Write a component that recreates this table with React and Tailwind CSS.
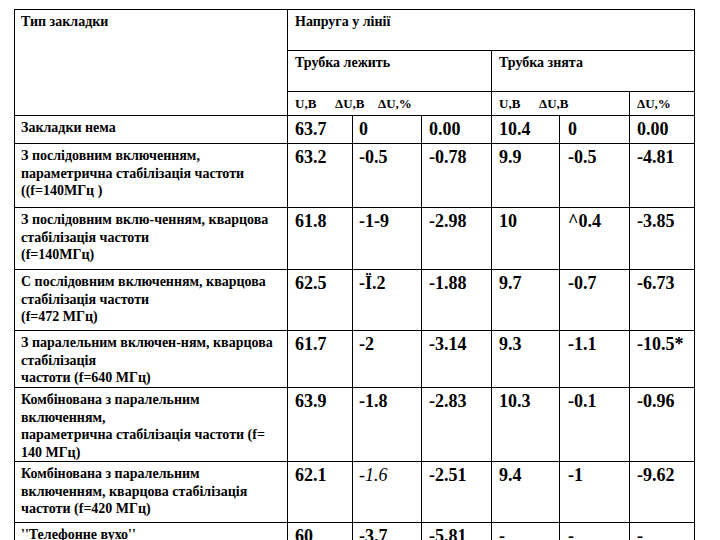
import React from "react";

const rows = [
  {
    h: "h-[28px]",
    label: ["Закладки нема"],
    vals: ["63.7", "0", "0.00", "10.4", "0", "0.00"],
  },
  {
    h: "h-[64px]",
    label: ["З послідовним включенням,", "параметрична стабілізація частоти", "((f=140МГц )"],
    vals: ["63.2", "-0.5", "-0.78", "9.9", "-0.5", "-4.81"],
  },
  {
    h: "h-[62px]",
    label: ["З послідовним вклю-ченням, кварцова", "стабілізація частоти", "(f=140МГц)"],
    vals: ["61.8", "-1-9", "-2.98", "10", "^0.4", "-3.85"],
  },
  {
    h: "h-[61px]",
    label: ["С послідовним включенням, кварцова", "стабілізація частоти", "(f=472 МГц)"],
    vals: ["62.5", "-Ï.2", "-1.88", "9.7", "-0.7", "-6.73"],
  },
  {
    h: "h-[57px]",
    label: ["З паралельним включен-ням, кварцова", "стабілізація", "частоти (f=640 МГц)"],
    vals: ["61.7", "-2", "-3.14", "9.3", "-1.1", "-10.5*"],
  },
  {
    h: "h-[74px]",
    label: ["Комбінована з паралельним", "включенням,", "параметрична стабілізація частоти (f=", "140 МГц)"],
    vals: ["63.9", "-1.8", "-2.83", "10.3", "-0.1", "-0.96"],
  },
  {
    h: "h-[61px]",
    label: ["Комбінована з паралельним", "включенням, кварцова стабілізація", "частоти (f=420 МГц)"],
    vals: ["62.1", "-1.6", "-2.51", "9.4", "-1", "-9.62"],
    italic: 1,
  },
  {
    h: "h-[61px]",
    label: ["''Телефонне вухо''"],
    vals: ["60", "-3.7", "-5.81", "-", "-", "-"],
  },
];

const pads = ["pl-[7px]", "pl-[6px]", "pl-[7px]", "pl-[7px]", "pl-[8px]", "pl-[7px]"];

export default function App() {
  return (
    <div className="bg-white min-h-[540px] w-[720px] pt-[9px] pl-[14px] font-['Liberation_Serif',serif] text-black">
      <table className="table-fixed border-collapse w-[681px] font-bold">
        <colgroup>
          <col className="w-[273px]" />
          <col className="w-[65px]" />
          <col className="w-[69px]" />
          <col className="w-[70px]" />
          <col className="w-[68px]" />
          <col className="w-[70px]" />
          <col className="w-[65px]" />
        </colgroup>
        <tbody>
          <tr className="h-[41px]">
            <td rowSpan={3} className="border border-black align-top pl-[6px] pt-[3px] text-[14px] leading-[18px]">
              Тип закладки
            </td>
            <td colSpan={6} className="border border-black align-top pl-[7px] pt-[3px] text-[14px] leading-[18px]">
              Напруга у лінії
            </td>
          </tr>
          <tr className="h-[41px]">
            <td colSpan={3} className="border border-black align-top pl-[7px] pt-[3px] text-[14px] leading-[18px]">
              Трубка лежить
            </td>
            <td colSpan={3} className="border border-black align-top pl-[7px] pt-[3px] text-[14px] leading-[18px]">
              Трубка знята
            </td>
          </tr>
          <tr className="h-[24px]">
            <td colSpan={3} className="border border-black align-top pl-[7px] pt-[3px] text-[13px] leading-[18px] whitespace-nowrap">
              <span className="inline-block w-[40px]">U,B</span>
              <span className="inline-block w-[43px]">ΔU,B</span>
              <span>ΔU,%</span>
            </td>
            <td colSpan={2} className="border border-black align-top pl-[7px] pt-[3px] text-[13px] leading-[18px] whitespace-nowrap">
              <span className="inline-block w-[40px]">U,B</span>
              <span>ΔU,B</span>
            </td>
            <td className="border border-black align-top pl-[7px] pt-[3px] text-[13px] leading-[18px] whitespace-nowrap">
              ΔU,%
            </td>
          </tr>
          {rows.map((r, i) => (
            <tr key={i} className={r.h}>
              <td className="border border-black align-top pl-[6px] pt-[3px] text-[14px] leading-[17.5px] whitespace-nowrap">
                {r.label.map((l, j) => (
                  <div key={j}>{l}</div>
                ))}
              </td>
              {r.vals.map((v, j) => (
                <td
                  key={j}
                  className={
                    "border border-black align-top pt-[3px] text-[18px] leading-[20px] whitespace-nowrap " +
                    pads[j] +
                    (r.italic === j ? " italic font-normal" : "")
                  }
                >
                  {v}
                </td>
              ))}
            </tr>
          ))}
        </tbody>
      </table>
    </div>
  );
}
